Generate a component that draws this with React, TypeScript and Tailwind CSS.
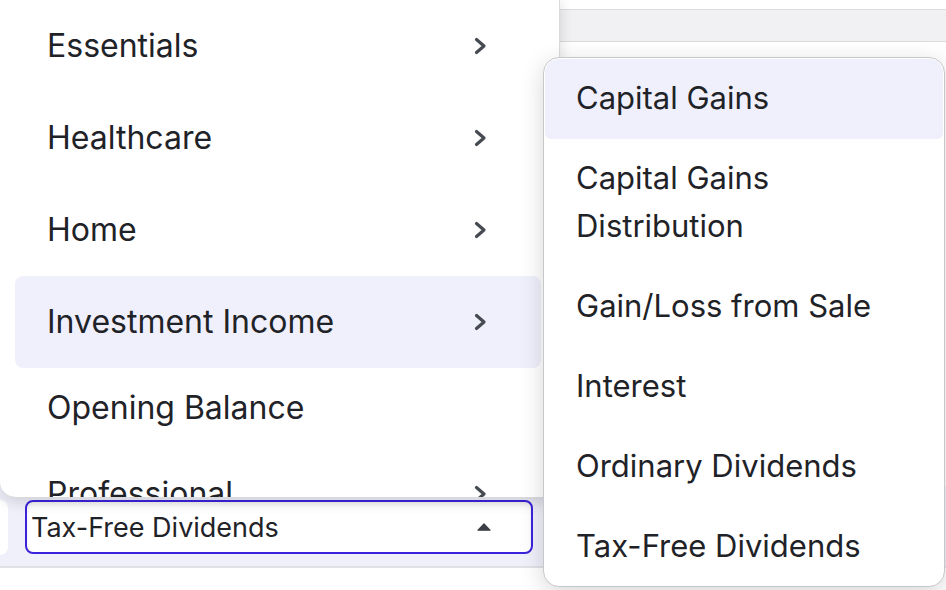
import React from "react";

const Chevron = () => (
  <svg width="13" height="18" viewBox="0 0 13 18" fill="none">
    <polyline points="2.5,2.5 10,9 2.5,15.5" stroke="#464b51" strokeWidth="3.2" strokeLinecap="round" strokeLinejoin="round" />
  </svg>
);

const Caret = () => (
  <svg width="14" height="8" viewBox="0 0 14 8">
    <path d="M7 0.8 L13 7.2 L1 7.2 Z" fill="#3c4046" stroke="#3c4046" strokeWidth="1.2" strokeLinejoin="round" />
  </svg>
);

const mainItems: { label: string; sub: boolean; active?: boolean }[] = [
  { label: "Essentials", sub: true },
  { label: "Healthcare", sub: true },
  { label: "Home", sub: true },
  { label: "Investment Income", sub: true, active: true },
  { label: "Opening Balance", sub: false },
  { label: "Professional", sub: true },
];

const subItems = [
  "Capital Gains",
  "Capital Gains Distribution",
  "Gain/Loss from Sale",
  "Interest",
  "Ordinary Dividends",
  "Tax-Free Dividends",
];

export default function App() {
  return (
    <div
      className="relative w-[946px] h-[590px] overflow-hidden bg-white text-[#1f2328]"
      style={{ fontFamily: "Inter, 'Noto Sans', sans-serif" }}
    >
      {/* background page */}
      <div className="flex flex-col w-full h-full">
        <div className="h-[9px] bg-white" />
        <div className="h-[33px] bg-[#f1f1f3] border-y border-[#dcdcdf]" />
        <div className="h-[444px] bg-white" />
        <div className="h-[82px] bg-[#f0f0fb] border-b-2 border-[#e0e0e6] flex items-start pt-[14px]">
          <div className="w-[8px] h-[55px] bg-white rounded-r-[8px]" />
          <div className="ml-[17px] w-[508px] h-[54px] bg-white border-2 border-[#3b22dc] rounded-[8px] flex items-center justify-between pl-[4px] pr-[40px] shadow-[inset_0_3px_4px_rgba(0,0,0,0.06)]">
            <span className="text-[27px] leading-none">Tax-Free Dividends</span>
            <Caret />
          </div>
        </div>
        <div className="flex-1 bg-white" />
      </div>

      {/* main menu */}
      <div className="absolute left-0 top-[-2px] w-[560px] h-[500px] bg-white rounded-b-[16px] border-r border-b border-[#dadadd] shadow-[0_4px_14px_rgba(0,0,0,0.14)] overflow-hidden">
        <div className="pt-[2px] pl-[15px] pr-[18px] flex flex-col">
          {mainItems.map((it) => (
            <div
              key={it.label}
              className={
                "flex items-center justify-between pl-[32px] pr-[54px] rounded-[8px] text-[32px] shrink-0 " +
                (it.sub ? "h-[92px] " : "h-[80px] ") +
                (it.active ? "bg-[#f0f0fc]" : "")
              }
            >
              <span className="leading-none">{it.label}</span>
              {it.sub && <Chevron />}
            </div>
          ))}
        </div>
      </div>

      {/* submenu */}
      <div className="absolute left-[543px] top-[57px] w-[402px] h-[530px] bg-white rounded-[16px] border border-[#c8c8cc] shadow-[0_6px_24px_rgba(0,0,0,0.16)] p-px flex flex-col">
        {subItems.map((s, i) => (
          <div
            key={s}
            className={
              "pl-[31px] pr-[31px] pt-[15px] pb-[17px] text-[31px] leading-[48px] " +
              (i === 0 ? "bg-[#f0f0fc] rounded-t-[14px] rounded-b-[6px]" : "")
            }
          >
            {s}
          </div>
        ))}
      </div>
    </div>
  );
}
